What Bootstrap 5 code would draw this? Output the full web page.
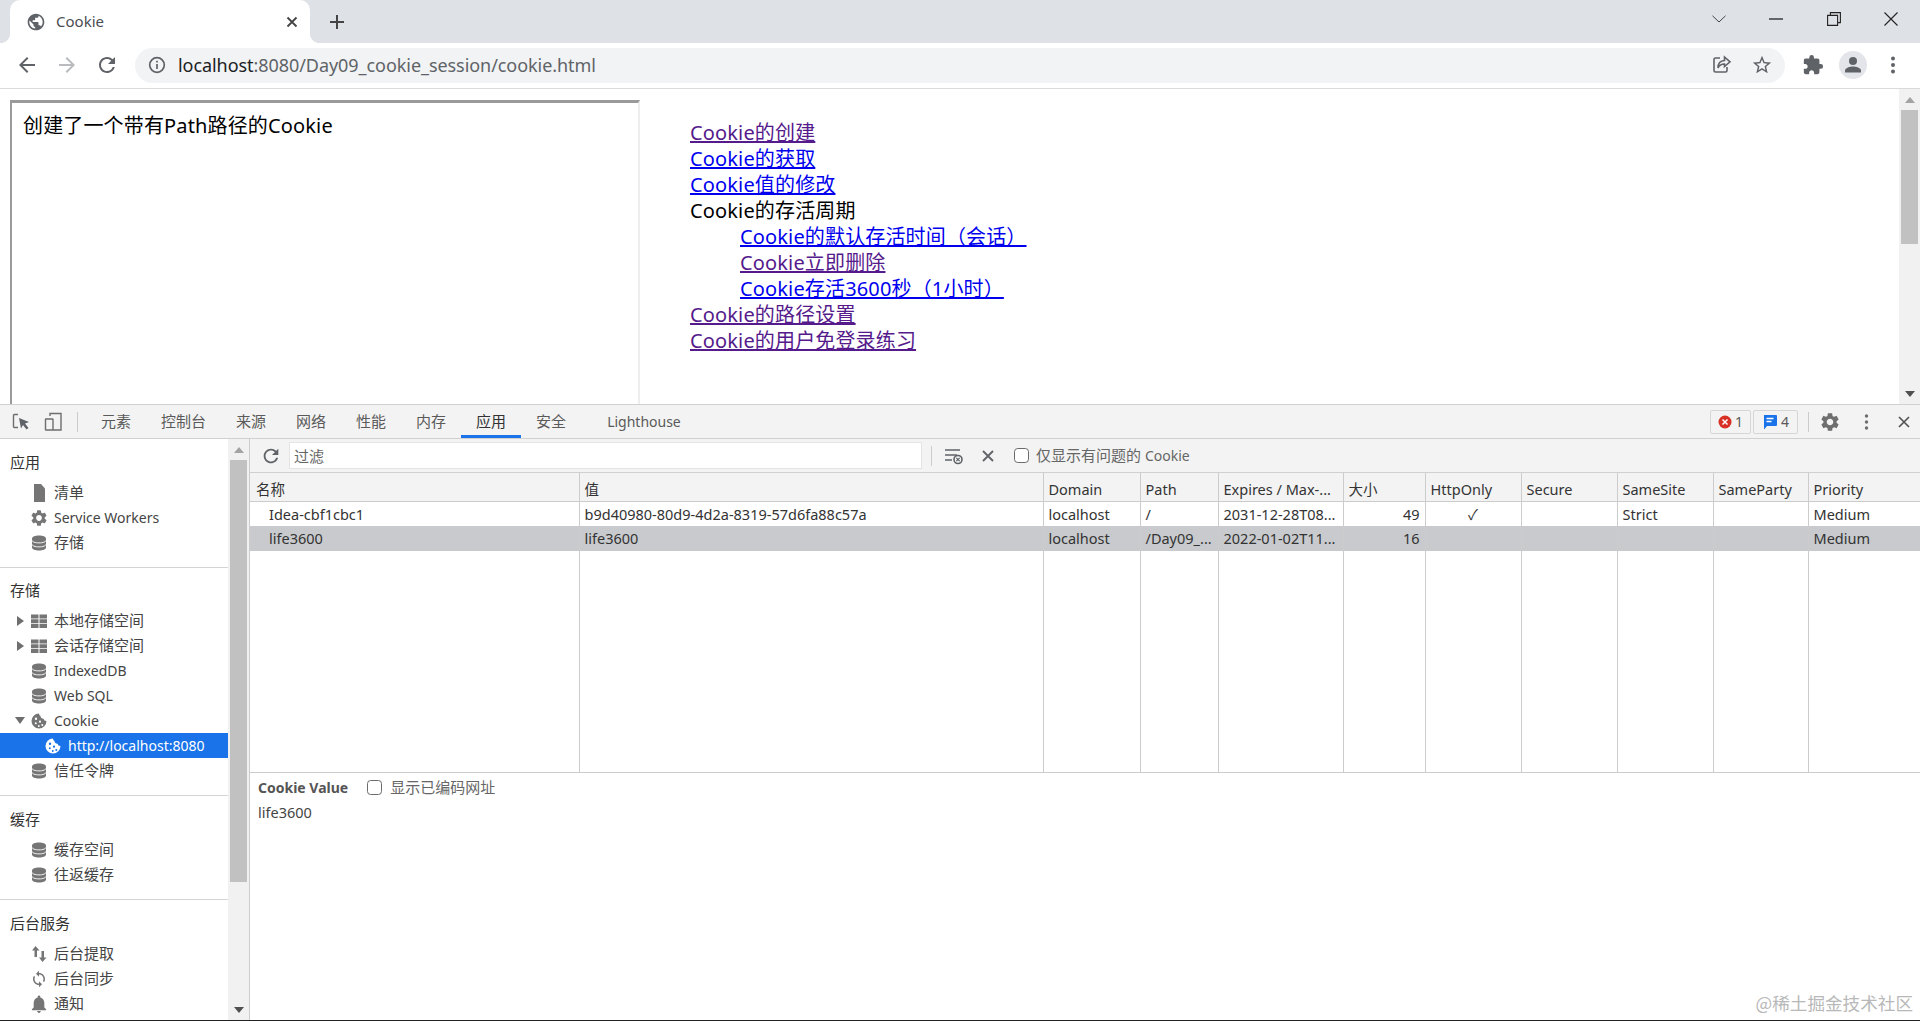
<!DOCTYPE html>
<html lang="zh-CN">
<head>
  <meta charset="UTF-8">
  <title>Cookie</title>
  <link href="https://cdn.jsdelivr.net/npm/bootstrap@5.3.0/dist/css/bootstrap.min.css" rel="stylesheet">
  <style>
    html, body { height: 100%; overflow: hidden; }
    body {
      width: 1920px; height: 1021px; background: #fff; color: #333;
      font-family: "Noto Sans", "Noto Sans CJK SC", sans-serif; font-size: 15px; line-height: 25px;
      border-bottom: 1px solid #222;
    }
    svg { display: block; flex: none; }
    .lat { font-size: 14px; }

    /* browser chrome */
    .tab-strip { height: 43px; background: #dee1e6; }
    .page-tab { width: 300px; height: 43px; margin-left: 10px; background: #fff; border-radius: 10px 10px 0 0; padding: 0 12px 0 16px; color: #4a4d51; font-size: 15px; position: relative; }
    .page-tab::before, .page-tab::after { content: ""; position: absolute; bottom: 0; width: 10px; height: 10px; }
    .page-tab::before { left: -10px; background: radial-gradient(circle at 0 0, #dee1e6 10px, #fff 10.5px); }
    .page-tab::after { right: -10px; background: radial-gradient(circle at 100% 0, #dee1e6 10px, #fff 10.5px); }
    .tab-title { margin-left: 10px; }
    .new-tab { margin-left: 12px; width: 30px; }
    .win-btn { width: 57.5px; height: 37px; }
    .tool-strip { height: 46px; padding: 0 7px 1px; background: #fff; border-bottom: 1px solid #d9dadc; }
    .tool-btn { width: 40px; height: 36px; }
    .url-pill { width: 1650px; height: 35px; margin: 0 8px; padding: 0 3px 0 13px; background: #f1f3f4; border-radius: 18px; }
    .url-text { margin-left: 12px; font-size: 18px; color: #202124; letter-spacing: -.06px; }
    .url-text span { color: #5f6368; }
    .avatar { width: 28px; height: 28px; border-radius: 50%; background: #e3e5ea; }

    /* page in the viewport */
    .page-view { height: 315px; color: #000; font-size: 20px; line-height: 26px; letter-spacing: .15px; }
    .demo-frame { width: 630px; margin: 11px 0 0 10px; padding: 10px 11px 0; border: 2px solid #eee; border-top: 3px solid #9a9a9a; border-left-color: #9a9a9a; border-bottom: 0; }
    .link-tree { margin: 31px 0 0 50px; }
    .link-tree ul { padding-left: 50px; }
    .link-tree ul, .link-tree { list-style: none; }
    .link-tree a { color: #00e; text-decoration: underline; }
    .link-tree a.seen { color: #551a8b; }

    .scroll-track { background: #f1f1f1; flex: none; }
    .page-scroll { width: 21px; }
    .side-scroll { width: 21px; }
    .scroll-arrow { height: 21px; }
    .scroll-thumb { background: #c1c1c1; margin-left: 2px; width: 17px; }
    .page-scroll .scroll-thumb { height: 134px; }
    .side-scroll .scroll-thumb { height: 422px; }

    /* devtools */
    .dev-tabs { height: 35px; background: #f3f3f3; border-top: 1px solid #d0d0d0; border-bottom: 1px solid #d0d0d0; color: #5a5a5a; }
    .dev-icon { width: 33px; height: 33px; }
    .dev-sep { width: 1px; height: 20px; background: #ccc; margin: 0 8px 0 7px; }
    .dev-nav .nav-link { height: 33px; padding: 0 15px; line-height: 33px; color: #5a5a5a; font-size: 15px; }
    .dev-nav .nav-link.active { color: #333; border-bottom: 3px solid #1a73e8; }
    .dev-nav .lh-tab { margin-left: 11px; }
    .dev-nav .lh-tab .nav-link { font-size: 14px; }
    .dev-count { height: 24px; margin-right: 2px; border: 1px solid #d6d6d6; border-radius: 2px; font-size: 14px; gap: 3px; }
    .count-err { width: 41px; }
    .count-msg { width: 45px; }
    .dev-body { height: 581px; }

    .side-list { width: 228px; flex: none; overflow: hidden; }
    .side-group { border-bottom: 1px solid #d4d4d4; padding: 12px 0; }
    .side-group.tight { padding-top: 11px; }
    .side-group:last-child { border-bottom: 0; }
    .side-label { padding-left: 10px; height: 25px; margin-bottom: 4px; color: #333; line-height: 23px; }
    .side-item { height: 25px; padding: 0 0 0 31px; border: 0; background: none; color: #444; gap: 7px; white-space: nowrap; }
    .side-item.has-arrow { padding-left: 17px; }
    .side-item.has-arrow.is-open { padding-left: 15px; }
    .side-item.sub { padding-left: 45px; }
    .side-item.picked { background: #1a73e8; color: #fff; }
    .tree-arrow { width: 0; height: 0; margin-right: 0; border-top: 5px solid transparent; border-bottom: 5px solid transparent; border-left: 7px solid #6e6e6e; }
    .tree-arrow.open { margin-right: -1px; border-left: 5px solid transparent; border-right: 5px solid transparent; border-top: 7px solid #6e6e6e; border-bottom: 0; }

    .cookie-pane { width: 1671px; border-left: 1px solid #ccc; }
    .filter-bar { height: 34px; background: #f3f3f3; border-bottom: 1px solid #d0d0d0; color: #5a5a5a; }
    .reload-icon { margin-left: 10px; }
    .filter-input { width: 631px; height: 25px; margin-left: 8px; padding: 0 4px; border: 0; border-radius: 0; font-size: 15px; background: #fff; box-shadow: 0 0 0 1px #e4e4e4; color: #555; }
    .filter-input::placeholder { color: #666; }
    .filter-sep { width: 1px; height: 20px; background: #ccc; margin: 0 12px 0 10px; }
    .clear-x { margin-left: 18px; }
    .plain-check { width: 15px; height: 15px; margin: 0; border: 1px solid #6b6b6b; border-radius: 3px; flex: none; }
    .filter-bar .plain-check { margin-left: 20px; }
    .filter-note { margin-left: 7px; color: #666; }
    .cookie-grid { table-layout: fixed; width: 1670px; height: 299px; margin: 0; color: #333; border-collapse: collapse; }
    .cookie-grid > :not(caption) > * > * { padding: 0 5px; border: 0; border-right: 1px solid #ccc; font-weight: 400; font-size: 14.5px; line-height: 24px; white-space: nowrap; overflow: hidden; box-shadow: none; background: transparent; color: inherit; }
    .cookie-grid > thead > tr > th { height: 28px; background: #f3f3f3; border-bottom: 1px solid #ccc; }
    .cookie-grid > thead > tr > th:first-child { padding-left: 6px; }
    .cookie-grid > tbody > tr.data-row > td { height: 25px; }
    .cookie-grid > tbody > tr.picked-row > td { background: #c8cacd; }
    .cookie-grid > tbody > tr > td.name-cell { padding-left: 19px; }
    .cookie-grid > tbody > tr > td.num-cell { text-align: right; }
    .cookie-grid > tbody > tr > td.tick-cell { text-align: center; }
    .w-name { width: 329px; } .w-value { width: 464px; } .w-domain { width: 97px; } .w-path { width: 78px; }
    .w-exp { width: 125px; } .w-size { width: 82px; } .w-http { width: 96px; } .w-sec { width: 96px; }
    .w-same { width: 96px; } .w-party { width: 95px; } .w-prio { width: 112px; }
    .value-pane { border-top: 1px solid #ccc; padding: 2px 8px; color: #444; font-size: 14.5px; }
    .value-head { height: 25px; }
    .value-head b { color: #555; margin-right: 19px; font-weight: 700; font-size: 14px; }
    .value-head label { margin-left: 8px; color: #666; font-size: 15px; }
    .site-mark { position: absolute; right: 7px; bottom: 5px; color: #b8b8b8; font-size: 17.6px; line-height: 24px; font-family: "Noto Sans CJK SC", sans-serif; }
  </style>
</head>
<body class="d-flex flex-column position-relative">

  <svg width="0" height="0" class="position-absolute">
    <symbol id="ic-db" viewBox="0 0 16 16">
      <path fill="#757575" d="M1 3.500C1 1.800 4.100.5 8 .5s7 1.300 7 3v9c0 1.700-3.100 3-7 3s-7-1.300-7-3z"/>
      <path fill="none" stroke="#fff" stroke-width=".9" d="M1 5.300c0 1.500 3.100 2.600 7 2.600s7-1.100 7-2.600M1 9.300c0 1.500 3.100 2.600 7 2.600s7-1.100 7-2.600"/>
    </symbol>
    <symbol id="ic-table" viewBox="0 0 16 16"><path fill="#757575" d="M0 1.500h7.500v4H0zM8.500 1.500H16v4H8.500zM0 6.200h7.500v4H0zM8.500 6.200H16v4H8.500zM0 10.900h7.500v4H0zM8.500 10.900H16v4H8.500z"/></symbol>
    <symbol id="ic-cookie" viewBox="0 0 16 16"><path d="M8 .5a7.500 7.500 0 1 0 7.500 7.500 3 3 0 0 1-3-2.300A3 3 0 0 1 9.500 3 2.600 2.600 0 0 1 8 .5zM5 4.500a1.200 1.200 0 1 1 0 2.400 1.200 1.200 0 0 1 0-2.400zm-.2 4.700a1 1 0 1 1 0 2 1 1 0 0 1 0-2zm4.200-1.600a1.100 1.100 0 1 1 0 2.200 1.100 1.100 0 0 1 0-2.200zm2.300 3.500a1 1 0 1 1 0 2 1 1 0 0 1 0-2zm-3.500 1a.9.900 0 1 1 0 1.800.9.900 0 0 1 0-1.800z"/></symbol>
  </svg>

  <!-- tab strip -->
  <div class="tab-strip d-flex align-items-start flex-none">
    <div class="page-tab d-flex align-items-center">
      <svg width="20" height="20" viewBox="0 0 24 24" fill="#5f6368"><path d="M12 2C6.480 2 2 6.480 2 12s4.480 10 10 10 10-4.480 10-10S17.520 2 12 2zm-1 17.930c-3.950-.49-7-3.850-7-7.930 0-.62.08-1.210.21-1.790L9 15v1c0 1.100.9 2 2 2v1.930zm6.900-2.540c-.26-.81-1-1.390-1.900-1.390h-1v-3c0-.55-.45-1-1-1H8v-2h2c.55 0 1-.45 1-1V7h2c1.100 0 2-.9 2-2v-.41c2.930 1.190 5 4.060 5 7.410 0 2.080-.8 3.970-2.100 5.390z"/></svg>
      <span class="tab-title">Cookie</span>
      <svg class="ms-auto" width="12" height="12" viewBox="0 0 12 12" stroke="#444" stroke-width="1.800"><path d="M1.500 1.500l9 9M10.500 1.500l-9 9"/></svg>
    </div>
    <div class="new-tab d-flex justify-content-center align-items-center align-self-stretch">
      <svg width="16" height="16" viewBox="0 0 16 16" stroke="#444" stroke-width="2"><path d="M8 1v14M1 8h14"/></svg>
    </div>
    <div class="ms-auto d-flex">
      <div class="win-btn d-flex justify-content-center align-items-center"><svg width="14" height="8" viewBox="0 0 14 8" fill="none" stroke="#444"><path d="M.5.800L7 7l6.500-6.200"/></svg></div>
      <div class="win-btn d-flex justify-content-center align-items-center"><svg width="14" height="2" viewBox="0 0 14 2" stroke="#222" stroke-width="1.300"><path d="M0 1h14"/></svg></div>
      <div class="win-btn d-flex justify-content-center align-items-center"><svg width="14" height="14" viewBox="0 0 14 14" fill="none" stroke="#222" stroke-width="1.100"><path d="M.6 3.400h10v10H.6zM3.400 3.400V.6h10v10h-2.800"/></svg></div>
      <div class="win-btn d-flex justify-content-center align-items-center"><svg width="14" height="14" viewBox="0 0 14 14" stroke="#222" stroke-width="1.100"><path d="M.5.500l13 13M13.500.500l-13 13"/></svg></div>
    </div>
  </div>

  <!-- address bar -->
  <div class="tool-strip d-flex align-items-center">
    <div class="tool-btn d-flex justify-content-center align-items-center"><svg width="24" height="24" viewBox="0 0 24 24" fill="#5f6368"><path d="M20 11H7.800l5.600-5.600L12 4l-8 8 8 8 1.400-1.400L7.800 13H20z"/></svg></div>
    <div class="tool-btn d-flex justify-content-center align-items-center"><svg width="24" height="24" viewBox="0 0 24 24" fill="#b9bbbe"><path d="M4 11h12.200l-5.600-5.600L12 4l8 8-8 8-1.400-1.400 5.600-5.600H4z"/></svg></div>
    <div class="tool-btn d-flex justify-content-center align-items-center"><svg width="24" height="24" viewBox="0 0 24 24" fill="#5f6368"><path d="M17.650 6.350A7.958 7.958 0 0 0 12 4c-4.420 0-7.990 3.580-7.990 8s3.570 8 7.990 8c3.730 0 6.840-2.550 7.730-6h-2.080A5.990 5.990 0 0 1 12 18c-3.310 0-6-2.690-6-6s2.690-6 6-6c1.660 0 3.140.69 4.220 1.780L13 11h7V4l-2.350 2.350z"/></svg></div>
    <div class="url-pill d-flex align-items-center">
      <svg width="18" height="18" viewBox="0 0 18 18" fill="none" stroke="#5f6368" stroke-width="1.700"><circle cx="9" cy="9" r="7.300"/><path d="M9 8v5M9 4.800v1.800"/></svg>
      <div class="url-text">localhost<span>:8080/Day09_cookie_session/cookie.html</span></div>
      <div class="tool-btn d-flex justify-content-center align-items-center ms-auto"><svg width="20" height="20" viewBox="0 0 20 20" fill="none" stroke="#5f6368" stroke-width="1.600"><path d="M8 3H3.500A1.500 1.500 0 0 0 2 4.500v11A1.500 1.500 0 0 0 3.500 17h10a1.500 1.500 0 0 0 1.500-1.500V12"/><path d="M12.500 2l5.500 4.800-5.500 4.700V9C9 9 7 10.500 6 13c0-4.500 2.500-7.300 6.500-7.500z"/></svg></div>
      <div class="tool-btn d-flex justify-content-center align-items-center"><svg width="22" height="22" viewBox="0 0 24 24" fill="#5f6368"><path d="M22 9.240l-7.190-.62L12 2 9.190 8.630 2 9.240l5.460 4.730L5.820 21 12 17.270 18.180 21l-1.630-7.030L22 9.240zM12 15.400l-3.760 2.270 1-4.280-3.320-2.880 4.380-.38L12 6.100l1.710 4.040 4.380.38-3.320 2.880 1 4.280L12 15.400z"/></svg></div>
    </div>
    <div class="tool-btn d-flex justify-content-center align-items-center"><svg width="22" height="22" viewBox="0 0 24 24" fill="#5f6368"><path d="M20.500 11H19V7c0-1.100-.9-2-2-2h-4V3.500a2.500 2.500 0 0 0-5 0V5H4c-1.100 0-1.990.9-1.990 2v3.800H3.500c1.490 0 2.700 1.210 2.700 2.700s-1.210 2.700-2.700 2.700H2V20c0 1.100.9 2 2 2h3.800v-1.500c0-1.490 1.210-2.700 2.700-2.700 1.490 0 2.700 1.210 2.700 2.700V22H17c1.100 0 2-.9 2-2v-4h1.500a2.500 2.500 0 0 0 0-5z"/></svg></div>
    <div class="tool-btn d-flex justify-content-center align-items-center"><div class="avatar d-flex justify-content-center align-items-center"><svg width="18" height="18" viewBox="0 0 18 18" fill="#5f6368"><circle cx="9" cy="5" r="4"/><path d="M1 16.500v-2c0-2.500 5-4 8-4s8 1.500 8 4v2z"/></svg></div></div>
    <div class="tool-btn d-flex justify-content-center align-items-center"><svg width="6" height="18" viewBox="0 0 6 18" fill="#5f6368"><circle cx="3" cy="2.500" r="2"/><circle cx="3" cy="9" r="2"/><circle cx="3" cy="15.500" r="2"/></svg></div>
  </div>

  <!-- page -->
  <div class="page-view d-flex">
    <div class="demo-frame">创建了一个带有Path路径的Cookie</div>
    <ul class="link-tree p-0 mb-0">
      <li><a class="seen" href="#">Cookie的创建</a></li>
      <li><a href="#">Cookie的获取</a></li>
      <li><a href="#">Cookie值的修改</a></li>
      <li>Cookie的存活周期
        <ul class="mb-0">
          <li><a href="#">Cookie的默认存活时间（会话）</a></li>
          <li><a class="seen" href="#">Cookie立即删除</a></li>
          <li><a href="#">Cookie存活3600秒（1小时）</a></li>
        </ul>
      </li>
      <li><a class="seen" href="#">Cookie的路径设置</a></li>
      <li><a class="seen" href="#">Cookie的用户免登录练习</a></li>
    </ul>
    <div class="scroll-track page-scroll ms-auto d-flex flex-column">
      <div class="scroll-arrow d-flex justify-content-center align-items-center"><svg width="10" height="6" viewBox="0 0 10 6" fill="#a3a3a3"><path d="M5 0l5 6H0z"/></svg></div>
      <div class="scroll-thumb"></div>
      <div class="scroll-arrow mt-auto d-flex justify-content-center align-items-center"><svg width="10" height="6" viewBox="0 0 10 6" fill="#505050"><path d="M5 6L0 0h10z"/></svg></div>
    </div>
  </div>

  <!-- devtools tabs -->
  <div class="dev-tabs d-flex align-items-center">
    <div class="dev-icon d-flex justify-content-center align-items-center ms-1"><svg width="20" height="20" viewBox="0 0 20 20"><path fill="none" stroke="#6e6e6e" stroke-width="1.400" d="M7 2.500H3.500a1 1 0 0 0-1 1v11a1 1 0 0 0 1 1H7"/><path fill="#5f6368" d="M8 6l10 4-4 1.500 3.500 4.500-2 1.500-3.500-4.500-2 3.500z"/></svg></div>
    <div class="dev-icon d-flex justify-content-center align-items-center"><svg width="22" height="22" viewBox="0 0 22 22" fill="none" stroke="#6e6e6e" stroke-width="1.400"><path d="M7 5V2.500h11v16.500h-8"/><rect x="2.500" y="8" width="7.500" height="11" rx=".5"/></svg></div>
    <div class="dev-sep"></div>
    <ul class="nav dev-nav">
      <li class="nav-item"><a class="nav-link" href="#">元素</a></li>
      <li class="nav-item"><a class="nav-link" href="#">控制台</a></li>
      <li class="nav-item"><a class="nav-link" href="#">来源</a></li>
      <li class="nav-item"><a class="nav-link" href="#">网络</a></li>
      <li class="nav-item"><a class="nav-link" href="#">性能</a></li>
      <li class="nav-item"><a class="nav-link" href="#">内存</a></li>
      <li class="nav-item"><a class="nav-link active" href="#">应用</a></li>
      <li class="nav-item"><a class="nav-link" href="#">安全</a></li>
      <li class="nav-item lh-tab"><a class="nav-link" href="#">Lighthouse</a></li>
    </ul>
    <div class="ms-auto d-flex align-items-center">
      <div class="dev-count count-err d-flex align-items-center justify-content-center"><svg width="14" height="14" viewBox="0 0 14 14"><circle cx="7" cy="7" r="6.500" fill="#d93025"/><path d="M4.500 4.500l5 5M9.500 4.500l-5 5" stroke="#fff" stroke-width="1.500"/></svg><span>1</span></div>
      <div class="dev-count count-msg d-flex align-items-center justify-content-center"><svg width="16" height="16" viewBox="0 0 16 16"><path fill="#1a73e8" d="M2 1h12a1 1 0 0 1 1 1v9a1 1 0 0 1-1 1H5l-3 3.500z"/><path d="M4.500 4.500h7M4.500 7.500h5" stroke="#fff" stroke-width="1.300"/></svg><span>4</span></div>
      <div class="dev-sep ms-2 me-1"></div>
      <div class="dev-icon d-flex justify-content-center align-items-center"><svg width="22" height="22" viewBox="0 0 24 24" fill="#6e6e6e"><path d="M19.140 12.940c.04-.3.06-.61.06-.94 0-.32-.02-.64-.07-.94l2.030-1.580a.49.49 0 0 0 .12-.61l-1.920-3.320a.488.488 0 0 0-.59-.22l-2.390.96c-.5-.38-1.030-.7-1.620-.94l-.36-2.540a.484.484 0 0 0-.48-.41h-3.840c-.24 0-.43.17-.47.41l-.36 2.540c-.59.24-1.130.57-1.620.94l-2.390-.96c-.22-.08-.47 0-.59.22L2.740 8.870c-.12.21-.08.47.12.61l2.030 1.580c-.05.3-.09.63-.09.94s.02.64.07.94l-2.030 1.580a.49.49 0 0 0-.12.61l1.920 3.320c.12.22.37.29.59.22l2.390-.96c.5.38 1.030.7 1.620.94l.36 2.540c.05.24.24.41.48.41h3.840c.24 0 .44-.17.47-.41l.36-2.540c.59-.24 1.130-.56 1.620-.94l2.390.96c.22.08.47 0 .59-.22l1.920-3.320c.12-.22.07-.47-.12-.61l-2.010-1.580zM12 15.600c-1.980 0-3.600-1.620-3.600-3.600s1.620-3.600 3.600-3.600 3.600 1.620 3.600 3.600-1.620 3.600-3.600 3.600z"/></svg></div>
      <div class="dev-icon d-flex justify-content-center align-items-center ms-1 me-1"><svg width="5" height="16" viewBox="0 0 5 16" fill="#6e6e6e"><circle cx="2.500" cy="2" r="1.700"/><circle cx="2.500" cy="8" r="1.700"/><circle cx="2.500" cy="14" r="1.700"/></svg></div>
      <div class="dev-icon d-flex justify-content-center align-items-center"><svg width="12" height="12" viewBox="0 0 12 12" stroke="#555" stroke-width="1.700"><path d="M1 1l10 10M11 1L1 11"/></svg></div>
    </div>
  </div>

  <!-- devtools body -->
  <div class="dev-body d-flex">
    <div class="side-list">
      <div class="side-group">
        <div class="side-label">应用</div>
        <div class="list-group list-group-flush">
          <div class="side-item d-flex align-items-center"><svg width="16" height="18" viewBox="0 0 16 18" fill="#757575"><path d="M3 0h7l4 4.500V18H3z"/></svg><span>清单</span></div>
          <div class="side-item d-flex align-items-center"><svg width="16" height="16" viewBox="2 2 20 20" fill="#757575"><path d="M19.140 12.940c.04-.3.06-.61.06-.94 0-.32-.02-.64-.07-.94l2.030-1.580a.49.49 0 0 0 .12-.61l-1.920-3.320a.488.488 0 0 0-.59-.22l-2.390.96c-.5-.38-1.030-.7-1.620-.94l-.36-2.540a.484.484 0 0 0-.48-.41h-3.840c-.24 0-.43.17-.47.41l-.36 2.540c-.59.24-1.130.57-1.620.94l-2.390-.96c-.22-.08-.47 0-.59.22L2.740 8.870c-.12.21-.08.47.12.61l2.030 1.580c-.05.3-.09.63-.09.94s.02.64.07.94l-2.030 1.580a.49.49 0 0 0-.12.61l1.920 3.320c.12.22.37.29.59.22l2.390-.96c.5.38 1.030.7 1.620.94l.36 2.540c.05.24.24.41.48.41h3.840c.24 0 .44-.17.47-.41l.36-2.540c.59-.24 1.130-.56 1.620-.94l2.390.96c.22.08.47 0 .59-.22l1.920-3.320c.12-.22.07-.47-.12-.61l-2.010-1.580zM12 15.600c-1.980 0-3.600-1.620-3.600-3.600s1.620-3.600 3.600-3.600 3.600 1.620 3.600 3.600-1.620 3.600-3.600 3.600z"/></svg><span class="lat">Service Workers</span></div>
          <div class="side-item d-flex align-items-center"><svg width="16" height="16"><use href="#ic-db"/></svg><span>存储</span></div>
        </div>
      </div>
      <div class="side-group tight">
        <div class="side-label">存储</div>
        <div class="list-group list-group-flush">
          <div class="side-item has-arrow d-flex align-items-center"><span class="tree-arrow"></span><svg width="16" height="16"><use href="#ic-table"/></svg><span>本地存储空间</span></div>
          <div class="side-item has-arrow d-flex align-items-center"><span class="tree-arrow"></span><svg width="16" height="16"><use href="#ic-table"/></svg><span>会话存储空间</span></div>
          <div class="side-item d-flex align-items-center"><svg width="16" height="16"><use href="#ic-db"/></svg><span class="lat">IndexedDB</span></div>
          <div class="side-item d-flex align-items-center"><svg width="16" height="16"><use href="#ic-db"/></svg><span class="lat">Web SQL</span></div>
          <div class="side-item has-arrow is-open d-flex align-items-center"><span class="tree-arrow open"></span><svg width="16" height="16" fill="#757575"><use href="#ic-cookie"/></svg><span class="lat">Cookie</span></div>
          <div class="side-item sub picked d-flex align-items-center"><svg width="16" height="16" fill="#fff"><use href="#ic-cookie"/></svg><span class="lat">http://localhost:8080</span></div>
          <div class="side-item d-flex align-items-center"><svg width="16" height="16"><use href="#ic-db"/></svg><span>信任令牌</span></div>
        </div>
      </div>
      <div class="side-group">
        <div class="side-label">缓存</div>
        <div class="list-group list-group-flush">
          <div class="side-item d-flex align-items-center"><svg width="16" height="16"><use href="#ic-db"/></svg><span>缓存空间</span></div>
          <div class="side-item d-flex align-items-center"><svg width="16" height="16"><use href="#ic-db"/></svg><span>往返缓存</span></div>
        </div>
      </div>
      <div class="side-group">
        <div class="side-label">后台服务</div>
        <div class="list-group list-group-flush">
          <div class="side-item d-flex align-items-center"><svg width="16" height="18" viewBox="0 0 16 18" fill="#757575"><path d="M4.500 1L8.500 5.500H6V12H3.500V5.500H1zM11.500 17l4-4.500H13V6h-2.500v6.500H8z"/></svg><span>后台提取</span></div>
          <div class="side-item d-flex align-items-center"><svg width="16" height="18" viewBox="3 0 18 24" fill="#757575"><path d="M12 4V1L8 5l4 4V6c3.310 0 6 2.690 6 6 0 1.010-.25 1.970-.7 2.800l1.460 1.460A7.930 7.930 0 0 0 20 12c0-4.420-3.580-8-8-8zm0 14c-3.310 0-6-2.690-6-6 0-1.010.25-1.970.7-2.800L5.240 7.740A7.930 7.930 0 0 0 4 12c0 4.420 3.580 8 8 8v3l4-4-4-4v3z"/></svg><span>后台同步</span></div>
          <div class="side-item d-flex align-items-center"><svg width="16" height="18" viewBox="3 2 18 20" fill="#757575"><path d="M12 22c1.100 0 2-.9 2-2h-4c0 1.100.9 2 2 2zm6-6v-5c0-3.070-1.630-5.640-4.500-6.320V4c0-.83-.67-1.500-1.500-1.500s-1.500.67-1.500 1.500v.68C7.640 5.360 6 7.920 6 11v5l-2 2v1h16v-1l-2-2z"/></svg><span>通知</span></div>
        </div>
      </div>
    </div>

    <div class="scroll-track side-scroll d-flex flex-column">
      <div class="scroll-arrow d-flex justify-content-center align-items-center"><svg width="10" height="6" viewBox="0 0 10 6" fill="#a3a3a3"><path d="M5 0l5 6H0z"/></svg></div>
      <div class="scroll-thumb"></div>
      <div class="scroll-arrow mt-auto d-flex justify-content-center align-items-center"><svg width="10" height="6" viewBox="0 0 10 6" fill="#505050"><path d="M5 6L0 0h10z"/></svg></div>
    </div>

    <div class="cookie-pane d-flex flex-column">
      <div class="filter-bar d-flex align-items-center">
        <svg class="reload-icon" width="22" height="22" viewBox="0 0 24 24" fill="#5f6368"><path d="M17.650 6.350A7.958 7.958 0 0 0 12 4c-4.420 0-7.990 3.580-7.990 8s3.570 8 7.990 8c3.730 0 6.840-2.550 7.730-6h-2.080A5.990 5.990 0 0 1 12 18c-3.310 0-6-2.690-6-6s2.690-6 6-6c1.660 0 3.140.69 4.220 1.780L13 11h7V4l-2.350 2.350z"/></svg>
        <input class="form-control filter-input" type="text" placeholder="过滤">
        <div class="filter-sep"></div>
        <svg width="20" height="18" viewBox="0 0 20 18" fill="none" stroke="#5f6368" stroke-width="1.600"><path d="M1 3h15M1 8h12M1 13h7"/><circle cx="14" cy="12.500" r="4"/><path d="M12.300 10.800l3.400 3.400M15.700 10.800l-3.400 3.400" stroke-width="1.200"/></svg>
        <svg class="clear-x" width="12" height="12" viewBox="0 0 12 12" stroke="#5f6368" stroke-width="1.800"><path d="M1 1l10 10M11 1L1 11"/></svg>
        <input class="form-check-input plain-check" type="checkbox" aria-label="仅显示有问题的 Cookie">
        <span class="filter-note">仅显示有问题的 <span class="lat">Cookie</span></span>
      </div>
      <table class="table cookie-grid">
        <colgroup>
          <col class="w-name"><col class="w-value"><col class="w-domain"><col class="w-path"><col class="w-exp"><col class="w-size"><col class="w-http"><col class="w-sec"><col class="w-same"><col class="w-party"><col class="w-prio">
        </colgroup>
        <thead>
          <tr><th>名称</th><th>值</th><th>Domain</th><th>Path</th><th>Expires / Max-...</th><th>大小</th><th>HttpOnly</th><th>Secure</th><th>SameSite</th><th>SameParty</th><th>Priority</th></tr>
        </thead>
        <tbody>
          <tr class="data-row"><td class="name-cell">Idea-cbf1cbc1</td><td>b9d40980-80d9-4d2a-8319-57d6fa88c57a</td><td>localhost</td><td>/</td><td>2031-12-28T08...</td><td class="num-cell">49</td><td class="tick-cell">✓</td><td></td><td>Strict</td><td></td><td>Medium</td></tr>
          <tr class="data-row picked-row"><td class="name-cell">life3600</td><td>life3600</td><td>localhost</td><td>/Day09_...</td><td>2022-01-02T11...</td><td class="num-cell">16</td><td></td><td></td><td></td><td></td><td>Medium</td></tr>
          <tr><td></td><td></td><td></td><td></td><td></td><td></td><td></td><td></td><td></td><td></td><td></td></tr>
        </tbody>
      </table>
      <div class="value-pane flex-grow-1">
        <div class="value-head d-flex align-items-center"><b>Cookie Value</b><input class="form-check-input plain-check" type="checkbox" id="showEncoded"><label for="showEncoded">显示已编码网址</label></div>
        <div>life3600</div>
      </div>
    </div>
  </div>

  <div class="site-mark">@稀土掘金技术社区</div>
</body>
</html>
